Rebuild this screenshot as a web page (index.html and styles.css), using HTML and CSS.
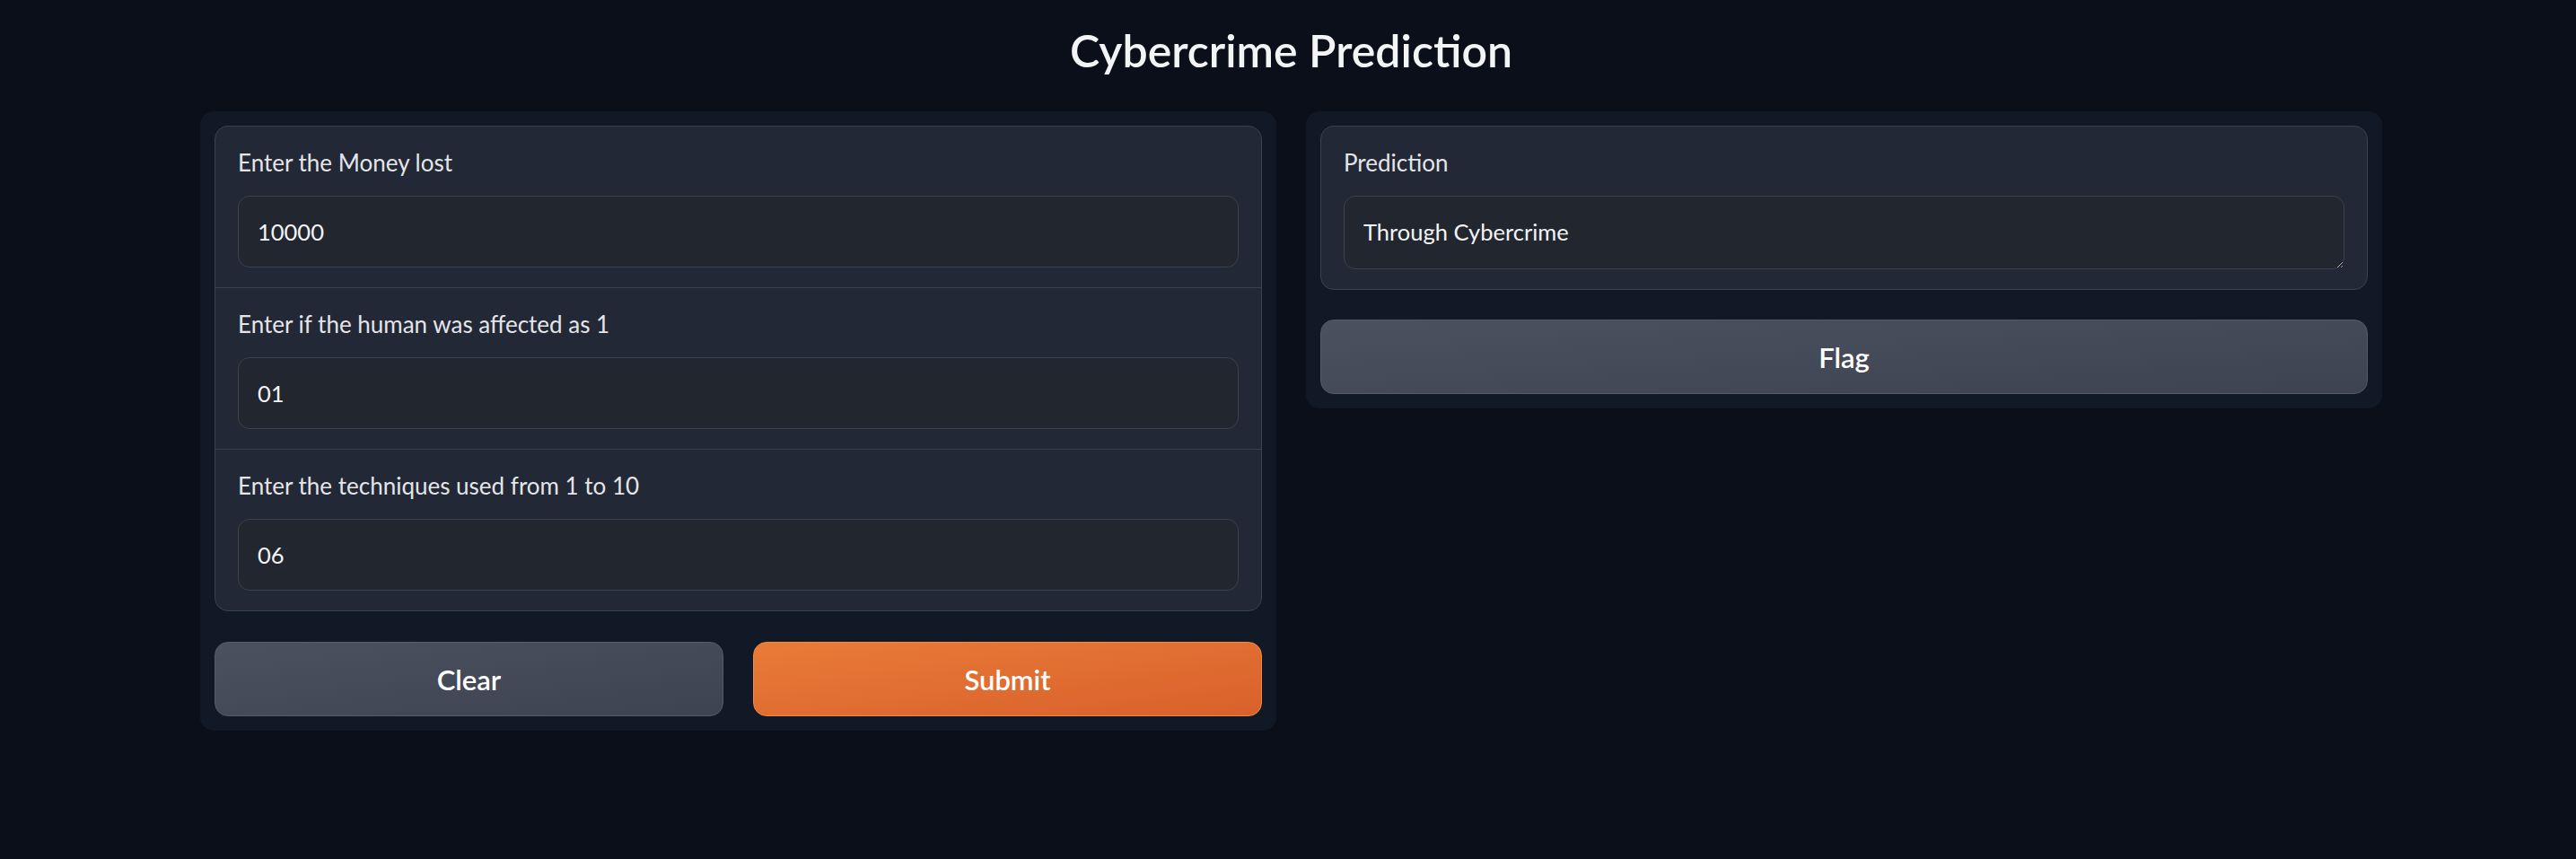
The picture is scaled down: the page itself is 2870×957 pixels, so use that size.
FILE: index.html
```html
<!DOCTYPE html>
<html lang="en">
<head>
<meta charset="utf-8">
<title>Cybercrime Prediction</title>
<link rel="stylesheet" href="styles.css">
</head>
<body>
<div class="app">
  <h1 class="title">Cybercrime Prediction</h1>
  <div class="row">
    <div class="panel panel-left">
      <div class="form">
        <label class="field">
          <span class="field-label">Enter the Money lost</span>
          <input class="field-input" type="text" value="10000">
        </label>
        <label class="field">
          <span class="field-label">Enter if the human was affected as 1</span>
          <input class="field-input" type="text" value="01">
        </label>
        <label class="field">
          <span class="field-label">Enter the techniques used from 1 to 10</span>
          <input class="field-input" type="text" value="06">
        </label>
      </div>
      <div class="btn-row">
        <button class="btn btn-secondary">Clear</button>
        <button class="btn btn-primary">Submit</button>
      </div>
    </div>
    <div class="panel panel-right">
      <div class="form">
        <label class="field field-out">
          <span class="field-label">Prediction</span>
          <textarea class="field-area" rows="1">Through Cybercrime</textarea>
        </label>
      </div>
      <button class="btn btn-secondary">Flag</button>
    </div>
  </div>
</div>
</body>
</html>
```

FILE: styles.css
```css
html, body {
  margin: 0;
  padding: 0;
  background: #0b0f19;
  color-scheme: dark;
}

body {
  font-family: Lato, "Noto Sans", "Liberation Sans", sans-serif;
  color: #e5e7eb;
}

.app {
  margin-left: 223px;
  width: 2431px;
}

.title {
  margin: 28px 0 39px;
  font-size: 50px;
  line-height: 57px;
  font-weight: 600;
  text-align: center;
  color: #f3f4f6;
}

.row {
  display: flex;
  align-items: flex-start;
  gap: 33px;
}

.panel {
  flex: 1 1 0;
  min-width: 0;
  background: #111826;
  border-radius: 15px;
  padding: 16px;
  display: flex;
  flex-direction: column;
}

.panel-left {
  gap: 34px;
}

.panel-right {
  gap: 33px;
}

.form {
  background: #222835;
  border: 1px solid #3b414e;
  border-radius: 15px;
  overflow: hidden;
  display: flex;
  flex-direction: column;
}

.field {
  display: flex;
  flex-direction: column;
  padding: 22px 25px;
}

.field + .field {
  border-top: 1px solid #3b414e;
}

.field-label {
  font-size: 26px;
  line-height: 37px;
  margin-bottom: 18px;
  color: #e4e5e9;
}

.field-input,
.field-area {
  box-sizing: border-box;
  width: 100%;
  margin: 0;
  background: #21262f;
  border: 1px solid #3b414e;
  border-radius: 13px;
  font-family: Lato, "Noto Sans", "Liberation Sans", sans-serif;
  font-size: 25.5px;
  color: #f3f4f6;
  outline: none;
}

.field-input {
  height: 80px;
  padding: 0 21px;
}

.field-area {
  display: block;
  height: 82px;
  padding: 22px 21px 24px;
  line-height: 34px;
  resize: vertical;
}

.btn {
  box-sizing: border-box;
  height: 83px;
  border-radius: 15px;
  font-family: Lato, "Noto Sans", "Liberation Sans", sans-serif;
  font-size: 31px;
  font-weight: 600;
  color: #ffffff;
  cursor: pointer;
}

.btn-row {
  display: flex;
  gap: 33px;
}

.btn-row .btn {
  flex: 1 1 0;
}

.btn-secondary {
  background: linear-gradient(to bottom right, #4b515e, #3d4351);
  border: 1px solid #555b67;
}

.btn-primary {
  background: linear-gradient(to bottom right, #e97b38, #d9602b);
  border: 1px solid #ef8a3f;
}
```
